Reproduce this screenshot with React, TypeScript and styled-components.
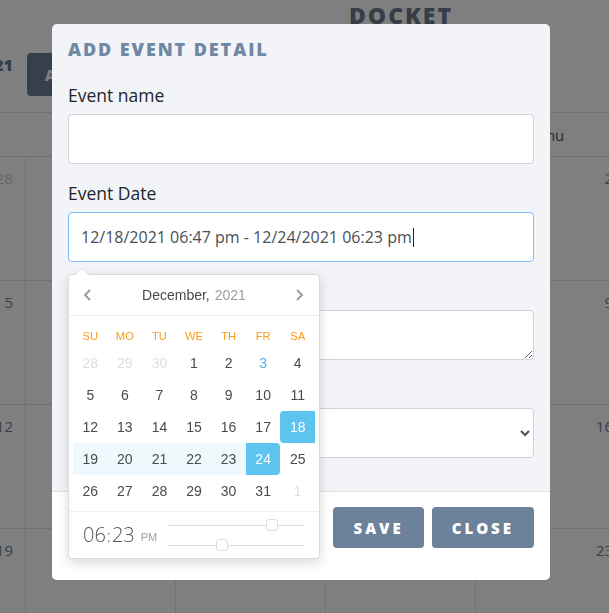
import React from 'react';
import styled, { createGlobalStyle, css } from 'styled-components';

const GlobalStyle = createGlobalStyle`
  * {
    box-sizing: border-box;
  }
  html,
  body {
    margin: 0;
    padding: 0;
    width: 609px;
    height: 613px;
    overflow: hidden;
    background: #ffffff;
  }
  body {
    font-family: 'Open Sans', 'Liberation Sans', sans-serif;
  }
`;

interface DayCell {
  day: number;
  outside?: boolean;
  current?: boolean;
  rangeFrom?: boolean;
  rangeTo?: boolean;
  inRange?: boolean;
}

interface CellProps {
  $outside?: boolean;
  $current?: boolean;
  $rangeFrom?: boolean;
  $rangeTo?: boolean;
  $inRange?: boolean;
}

const WEEK_NAMES = ['Sun', 'Mon', 'Tue', 'Wed', 'Thu', 'Fri', 'Sat'];
const PICKER_NAMES = ['Su', 'Mo', 'Tu', 'We', 'Th', 'Fr', 'Sa'];

const buildDays = (): DayCell[] => {
  const days: DayCell[] = [28, 29, 30].map((day) => ({ day, outside: true }));
  for (let d = 1; d <= 31; d++) {
    days.push({
      day: d,
      current: d === 3,
      rangeFrom: d === 18,
      rangeTo: d === 24,
      inRange: d > 18 && d < 24,
    });
  }
  days.push({ day: 1, outside: true });
  return days;
};

const days = buildDays();
const weeks = [0, 1, 2, 3].map((w) => days.slice(w * 7, w * 7 + 7));

const hours = { value: 18, max: 23 };
const minutes = { value: 23, max: 59 };

export default function App() {
  const sliderLeft = (value: number, max: number) => `${(value / max) * 126}px`;

  return (
    <>
      <GlobalStyle />
      <Page>
        <Brand>DOCKET</Brand>
        <Toolbar>
          <MonthLabel>December 2021</MonthLabel>
          <AddButton>ADD EVENT</AddButton>
        </Toolbar>
        <Calendar>
          <HeaderRow>
            {WEEK_NAMES.map((name) => (
              <HeaderCell key={name}>{name}</HeaderCell>
            ))}
          </HeaderRow>
          {weeks.map((week, i) => (
            <WeekRow key={i}>
              {week.map((cell, j) => (
                <BgDay key={j} $outside={cell.outside}>
                  {cell.day}
                </BgDay>
              ))}
            </WeekRow>
          ))}
        </Calendar>
      </Page>

      <Overlay>
        <Modal>
          <ModalHeader>
            <ModalTitle>ADD EVENT DETAIL</ModalTitle>
          </ModalHeader>
          <ModalBody>
            <FormGroup>
              <Label>Event name</Label>
              <TextInput type="text" />
            </FormGroup>
            <FormGroup>
              <Label>Event Date</Label>
              <DateField>
                <TextInput type="text" $focused readOnly value="12/18/2021 06:47 pm - 12/24/2021 06:23 pm" />
                <Caret />
              </DateField>
              <Picker>
                <Pointer />
                <PickerNav>
                  <NavAction>
                    <svg width="32" height="32" viewBox="0 0 32 32">
                      <path d="M 17,11 l -5,5 l 5,5" fill="none" stroke="#9c9c9c" strokeWidth="2" />
                    </svg>
                  </NavAction>
                  <NavTitle>
                    December,<i>2021</i>
                  </NavTitle>
                  <NavAction>
                    <svg width="32" height="32" viewBox="0 0 32 32">
                      <path d="M 14,11 l 5,5 l -5,5" fill="none" stroke="#9c9c9c" strokeWidth="2" />
                    </svg>
                  </NavAction>
                </PickerNav>
                <PickerContent>
                  <DayNames>
                    {PICKER_NAMES.map((name) => (
                      <DayName key={name}>{name}</DayName>
                    ))}
                  </DayNames>
                  <DaysGrid>
                    {days.map((cell, i) => (
                      <Cell
                        key={i}
                        $outside={cell.outside}
                        $current={cell.current}
                        $rangeFrom={cell.rangeFrom}
                        $rangeTo={cell.rangeTo}
                        $inRange={cell.inRange}>
                        {cell.day}
                      </Cell>
                    ))}
                  </DaysGrid>
                </PickerContent>
                <TimeBox>
                  <TimeCurrent>
                    <TimeDigits>06</TimeDigits>
                    <TimeColon>:</TimeColon>
                    <TimeDigits>23</TimeDigits>
                    <AmPm>PM</AmPm>
                  </TimeCurrent>
                  <Sliders>
                    <SliderRow>
                      <SliderThumb style={{ left: sliderLeft(hours.value, hours.max) }} />
                    </SliderRow>
                    <SliderRow>
                      <SliderThumb style={{ left: sliderLeft(minutes.value, minutes.max) }} />
                    </SliderRow>
                  </Sliders>
                </TimeBox>
              </Picker>
            </FormGroup>
            <FormGroup>
              <Label>Description</Label>
              <TextArea />
            </FormGroup>
            <FormGroup>
              <Label>Category</Label>
              <Select defaultValue="">
                <option value=""></option>
                <option value="work">Work</option>
                <option value="personal">Personal</option>
              </Select>
            </FormGroup>
          </ModalBody>
          <ModalFooter>
            <FooterButton>SAVE</FooterButton>
            <FooterButton>CLOSE</FooterButton>
          </ModalFooter>
        </Modal>
      </Overlay>
    </>
  );
}

/* background page */

const Page = styled.div`
  width: 1102px;
  margin-left: -150px;
  padding: 0 26px;
`;

const Brand = styled.h1`
  margin: 0;
  font-family: 'Open Sans', sans-serif;
  font-size: 23px;
  line-height: 30px;
  font-weight: 800;
  letter-spacing: 2px;
  text-align: center;
  color: #6c7a8f;
`;

const Toolbar = styled.div`
  display: flex;
  align-items: flex-start;
  gap: 14px;
  margin-top: 23px;
`;

const MonthLabel = styled.div`
  width: 137px;
  padding-top: 1px;
  font-size: 16px;
  line-height: 22px;
  font-weight: 800;
  text-align: right;
  white-space: nowrap;
  overflow: hidden;
  direction: rtl;
  color: #6c7a8f;
`;

const AddButton = styled.button`
  height: 43px;
  padding: 0 18px;
  border: none;
  border-radius: 4px;
  background: #6c819a;
  color: #ffffff;
  font-family: 'Open Sans', sans-serif;
  font-size: 15px;
  font-weight: 800;
  letter-spacing: 2px;
`;

const Calendar = styled.div`
  margin-top: 16px;
  border-top: 1px solid #dee2e6;
`;

const HeaderRow = styled.div`
  display: grid;
  grid-template-columns: repeat(7, 150px);
  height: 44px;
  border-bottom: 1px solid #dee2e6;
`;

const HeaderCell = styled.div`
  display: flex;
  align-items: center;
  justify-content: center;
  font-size: 15px;
  color: #495057;
`;

const WeekRow = styled.div`
  display: grid;
  grid-template-columns: repeat(7, 150px);
  height: 124px;
  border-bottom: 1px solid #dee2e6;
`;

const BgDay = styled.div<{ $outside?: boolean }>`
  padding: 10px 12px 0 0;
  text-align: right;
  font-size: 15px;
  line-height: 22px;
  border-right: 1px solid #dee2e6;
  color: ${({ $outside }) => ($outside ? '#cfd1d4' : '#737d92')};
`;

/* modal */

const Overlay = styled.div`
  position: fixed;
  inset: 0;
  padding: 24px 0 0 52px;
  background: rgba(0, 0, 0, 0.5);
`;

const Modal = styled.div`
  width: 498px;
  border-radius: 5px;
  background: #f3f4f8;
`;

const ModalHeader = styled.div`
  padding: 14px 16px 0;
`;

const ModalTitle = styled.h5`
  margin: 0;
  font-family: 'Open Sans', sans-serif;
  font-size: 18px;
  line-height: 22px;
  font-weight: 800;
  letter-spacing: 1.9px;
  color: #7088a3;
`;

const ModalBody = styled.div`
  padding: 23px 16px 16px;
`;

const FormGroup = styled.div`
  position: relative;
  margin-bottom: 17px;
`;

const Label = styled.label`
  display: block;
  margin-bottom: 7px;
  font-size: 17.5px;
  line-height: 24px;
  color: #212529;
`;

const fieldBase = css`
  display: block;
  width: 100%;
  height: 50px;
  padding: 0 12px;
  border: 1px solid #ced4da;
  border-radius: 4px;
  background: #ffffff;
  font-family: 'Open Sans', sans-serif;
  font-size: 16px;
  color: #495057;
  outline: none;
`;

const DateField = styled.div`
  position: relative;
`;

const Caret = styled.span`
  position: absolute;
  left: 345px;
  top: 16px;
  width: 1px;
  height: 19px;
  background: #212529;
`;

const TextInput = styled.input<{ $focused?: boolean }>`
  ${fieldBase}
  border-color: ${({ $focused }) => ($focused ? '#80bdff' : '#ced4da')};
`;

const TextArea = styled.textarea`
  ${fieldBase}
  padding: 6px 12px;
  resize: vertical;
`;

const Select = styled.select`
  ${fieldBase}
`;

const ModalFooter = styled.div`
  display: flex;
  justify-content: flex-end;
  gap: 8px;
  padding: 15px 16px 32px;
  border-top: 1px solid #dee2e6;
  border-radius: 0 0 5px 5px;
  background: #ffffff;
`;

const FooterButton = styled.button`
  height: 41px;
  padding: 0 20px;
  border: none;
  border-radius: 4px;
  background: #6c819a;
  color: #ffffff;
  font-family: 'Open Sans', sans-serif;
  font-size: 15px;
  font-weight: 800;
  letter-spacing: 3px;
`;

/* date picker */

const Picker = styled.div`
  position: absolute;
  top: 93px;
  left: 0;
  z-index: 2;
  width: 252px;
  border: 1px solid #dbdbdb;
  border-radius: 4px;
  background: #ffffff;
  box-shadow: 0 4px 12px rgba(0, 0, 0, 0.15);
  font-family: 'Liberation Sans', Tahoma, sans-serif;
  font-size: 14px;
  color: #4a4a4a;
`;

const Pointer = styled.div`
  position: absolute;
  top: -6px;
  left: 8px;
  width: 10px;
  height: 10px;
  border-top: 1px solid #dbdbdb;
  border-left: 1px solid #dbdbdb;
  border-top-left-radius: 2px;
  background: #ffffff;
  transform: rotate(45deg);
`;

const PickerNav = styled.div`
  position: relative;
  display: flex;
  justify-content: space-between;
  min-height: 32px;
  padding: 4px;
  border-bottom: 1px solid #efefef;
`;

const NavAction = styled.div`
  display: flex;
  align-items: center;
  justify-content: center;
  width: 32px;
  height: 32px;
`;

const NavTitle = styled.div`
  display: flex;
  align-items: center;
  justify-content: center;

  i {
    margin-left: 5px;
    font-style: normal;
    color: #9c9c9c;
  }
`;

const PickerContent = styled.div`
  padding: 4px;
`;

const DayNames = styled.div`
  display: flex;
  margin: 8px 0 3px;
`;

const DayName = styled.div`
  flex: 1;
  height: 16px;
  display: flex;
  align-items: center;
  justify-content: center;
  font-size: 11.2px;
  text-transform: uppercase;
  color: #ff9a19;
`;

const DaysGrid = styled.div`
  display: grid;
  grid-template-columns: repeat(7, 1fr);
`;

const Cell = styled.div<CellProps>`
  display: flex;
  align-items: center;
  justify-content: center;
  height: 32px;
  border-radius: 4px;
  color: ${({ $outside, $current }) => ($outside ? '#dedede' : $current ? '#4eb5e6' : '#4a4a4a')};

  ${({ $inRange }) =>
    $inRange &&
    css`
      border-radius: 0;
      background: rgba(92, 196, 239, 0.1);
    `}

  ${({ $rangeFrom, $rangeTo }) =>
    ($rangeFrom || $rangeTo) &&
    css`
      background: #5cc4ef;
      color: #ffffff;
      border-radius: ${$rangeFrom ? '4px 0 0 4px' : '0 4px 4px 0'};
    `}
`;

const TimeBox = styled.div`
  display: flex;
  align-items: center;
  padding: 3px 4px;
  border-top: 1px solid #efefef;
`;

const TimeCurrent = styled.div`
  display: flex;
  align-items: center;
  flex: 1;
  margin-left: 10px;
  color: #555555;
`;

const TimeDigits = styled.span`
  font-family: 'Open Sans', sans-serif;
  font-size: 20px;
  font-weight: 300;
  line-height: 1;
`;

const TimeColon = styled.span`
  margin: 0 1px;
  font-family: 'Open Sans', sans-serif;
  font-size: 17px;
  font-weight: 300;
  line-height: 1;
`;

const AmPm = styled.span`
  margin: 4px 0 0 6px;
  font-size: 11px;
  text-transform: uppercase;
  color: #9c9c9c;
`;

const Sliders = styled.div`
  flex: 0 1 138px;
  max-width: 138px;
  margin-right: 10px;
`;

const SliderRow = styled.div`
  position: relative;
  height: 20px;

  &::before {
    content: '';
    position: absolute;
    left: 0;
    right: 0;
    top: 50%;
    height: 1px;
    background: #dedede;
  }
`;

const SliderThumb = styled.div`
  position: absolute;
  top: 4px;
  width: 12px;
  height: 12px;
  border: 1px solid #dedede;
  border-radius: 3px;
  background: #ffffff;
`;
